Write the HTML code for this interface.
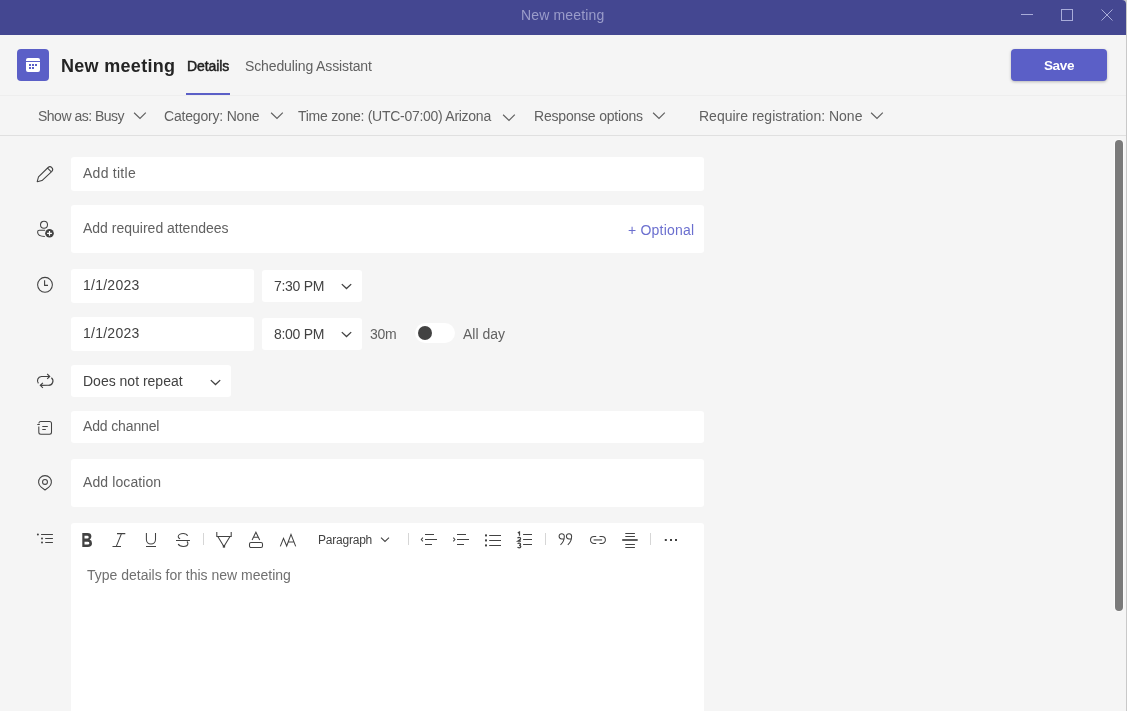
<!DOCTYPE html>
<html><head><meta charset="utf-8">
<style>
html,body{margin:0;padding:0;}
body{width:1127px;height:711px;overflow:hidden;position:relative;background:#c9c9c9;font-family:"Liberation Sans",sans-serif;}
.win{position:absolute;left:0;top:0;width:1126px;height:711px;background:#f5f5f5;border-top-right-radius:4px;overflow:hidden;}
.tb{position:absolute;left:0;top:0;width:1126px;height:35px;background:#444791;}
.a{position:absolute;white-space:pre;line-height:16px;font-size:14px;will-change:transform;}
.box{position:absolute;background:#fff;border-radius:3px;}
svg{position:absolute;overflow:visible;}
.hr{position:absolute;left:0;width:1126px;height:1px;background:#e6e6e6;}
</style></head><body>
<div class="win">
  <div class="tb"></div>
  <div class="a" style="left:521px;top:7px;color:#9a9cca;letter-spacing:0.16px;">New meeting</div>
  <!-- window controls -->
  <div style="position:absolute;left:1021px;top:14px;width:12px;height:1px;background:#a9acd9;"></div>
  <div style="position:absolute;left:1061px;top:9px;width:10px;height:10px;border:1px solid #a9acd9;"></div>
  <svg style="left:1101px;top:9px" width="12" height="12" viewBox="0 0 12 12"><path d="M0.5 0.5L11.5 11.5M11.5 0.5L0.5 11.5" stroke="#a9acd9" stroke-width="1"/></svg>

  <!-- header -->
  <div style="position:absolute;left:17px;top:49px;width:32px;height:32px;background:#5b5fc7;border-radius:4px;"></div>
  <svg style="left:26px;top:58px" width="14" height="14" viewBox="0 0 14 14"><path d="M0 3V2Q0 0 2 0H12Q14 0 14 2V3Z M0 4H14V12Q14 14 12 14H2Q0 14 0 12Z" fill="#fff"/><g fill="#5b5fc7" shape-rendering="crispEdges"><rect x="3" y="6" width="2" height="2"/><rect x="6" y="6" width="2" height="2"/><rect x="9" y="6" width="2" height="2"/><rect x="3" y="9" width="2" height="2"/><rect x="6" y="9" width="2" height="2"/></g></svg>
  <div class="a" style="left:61px;top:56px;font-size:18px;line-height:20px;font-weight:700;color:#242424;letter-spacing:0.3px;">New meeting</div>
  <div class="a" style="left:187px;top:58px;font-weight:400;color:#1f1f1f;-webkit-text-stroke:0.5px #1f1f1f;letter-spacing:-0.1px;">Details</div>
  <div style="position:absolute;left:186px;top:93px;width:44px;height:2px;background:#5b5fc7;"></div>
  <div class="a" style="left:245px;top:58px;color:#616161;letter-spacing:-0.12px;">Scheduling Assistant</div>
  <div style="position:absolute;left:1011px;top:49px;width:96px;height:32px;background:#5b5fc7;border-radius:4px;box-shadow:0 1px 3px rgba(0,0,0,0.25);"></div>
  <div class="a" style="left:1011px;width:96px;text-align:center;top:57.5px;font-size:13.5px;font-weight:700;color:#fff;letter-spacing:-0.35px;">Save</div>
  <div class="hr" style="top:95px;background:#eeeeee;"></div>

  <!-- options toolbar -->
  <div class="a" style="left:38px;top:108px;color:#616161;letter-spacing:-0.5px;">Show as: Busy</div>
  <div class="a" style="left:164px;top:108px;color:#616161;letter-spacing:-0.19px;">Category: None</div>
  <div class="a" style="left:298px;top:108px;color:#616161;letter-spacing:-0.27px;">Time zone: (UTC-07:00) Arizona</div>
  <div class="a" style="left:534px;top:108px;color:#616161;letter-spacing:-0.2px;">Response options</div>
  <div class="a" style="left:699px;top:108px;color:#616161;">Require registration: None</div>
  <div class="hr" style="top:135px;background:#e0e0e0;"></div>

  <!-- fields -->
  <div class="box" style="left:71px;top:157px;width:633px;height:34px;"></div>
  <div class="a" style="left:83px;top:165px;color:#616161;letter-spacing:0.26px;">Add title</div>
  <div class="box" style="left:71px;top:205px;width:633px;height:48px;"></div>
  <div class="a" style="left:83px;top:220px;color:#616161;">Add required attendees</div>
  <div class="a" style="left:628px;top:222px;color:#6b6fcf;letter-spacing:0.2px;">+ Optional</div>

  <div class="box" style="left:71px;top:269px;width:183px;height:34px;"></div>
  <div class="a" style="left:83px;top:277px;color:#424242;letter-spacing:0.25px;">1/1/2023</div>
  <div class="box" style="left:262px;top:270px;width:100px;height:32px;"></div>
  <div class="a" style="left:274px;top:278px;color:#424242;letter-spacing:-0.3px;">7:30 PM</div>

  <div class="box" style="left:71px;top:317px;width:183px;height:34px;"></div>
  <div class="a" style="left:83px;top:325px;color:#424242;letter-spacing:0.25px;">1/1/2023</div>
  <div class="box" style="left:262px;top:318px;width:100px;height:32px;"></div>
  <div class="a" style="left:274px;top:326px;color:#424242;letter-spacing:-0.3px;">8:00 PM</div>
  <div class="a" style="left:370px;top:326px;color:#616161;letter-spacing:-0.3px;">30m</div>
  <div class="box" style="left:415px;top:323px;width:40px;height:20px;border-radius:10px;"></div>
  <div style="position:absolute;left:418px;top:326px;width:14px;height:14px;border-radius:7px;background:#424242;"></div>
  <div class="a" style="left:463px;top:326px;color:#616161;">All day</div>

  <div class="box" style="left:71px;top:365px;width:160px;height:32px;"></div>
  <div class="a" style="left:83px;top:373px;color:#424242;">Does not repeat</div>

  <div class="box" style="left:71px;top:411px;width:633px;height:32px;"></div>
  <div class="a" style="left:83px;top:418px;color:#616161;letter-spacing:-0.14px;">Add channel</div>

  <div class="box" style="left:71px;top:459px;width:633px;height:48px;"></div>
  <div class="a" style="left:83px;top:474px;color:#616161;letter-spacing:0.1px;">Add location</div>

  <div class="box" style="left:71px;top:523px;width:633px;height:200px;"></div>
  <div class="a" style="left:318px;top:533px;font-size:12px;line-height:14px;color:#424242;letter-spacing:-0.22px;">Paragraph</div>
  <div class="a" style="left:87px;top:567px;color:#707070;">Type details for this new meeting</div>


  <!-- toolbar chevrons -->
  <svg style="left:128px;top:104px" width="24" height="24" viewBox="0 0 24 24"><path d="M6.1 8.8L12 14.4L17.8 8.6" fill="none" stroke="#616161" stroke-width="1.2"/></svg>
  <svg style="left:265px;top:104px" width="24" height="24" viewBox="0 0 24 24"><path d="M6.1 8.8L12 14.4L17.8 8.6" fill="none" stroke="#616161" stroke-width="1.2"/></svg>
  <svg style="left:497px;top:106px" width="24" height="24" viewBox="0 0 24 24"><path d="M6.1 8.8L12 14.4L17.8 8.6" fill="none" stroke="#616161" stroke-width="1.2"/></svg>
  <svg style="left:647px;top:104px" width="24" height="24" viewBox="0 0 24 24"><path d="M6.1 8.8L12 14.4L17.8 8.6" fill="none" stroke="#616161" stroke-width="1.2"/></svg>
  <svg style="left:865px;top:104px" width="24" height="24" viewBox="0 0 24 24"><path d="M6.1 8.8L12 14.4L17.8 8.6" fill="none" stroke="#616161" stroke-width="1.2"/></svg>
  <!-- input chevrons -->
  <svg style="left:334px;top:274px" width="24" height="24" viewBox="0 0 24 24"><path d="M7.8 10.1L12.5 14.5L17.2 10.1" fill="none" stroke="#424242" stroke-width="1.3"/></svg>
  <svg style="left:334px;top:322px" width="24" height="24" viewBox="0 0 24 24"><path d="M7.8 10.1L12.5 14.5L17.2 10.1" fill="none" stroke="#424242" stroke-width="1.3"/></svg>
  <svg style="left:203px;top:370px" width="24" height="24" viewBox="0 0 24 24"><path d="M7.8 10.1L12.5 14.5L17.2 10.1" fill="none" stroke="#424242" stroke-width="1.3"/></svg>

  <!-- left icons -->
  <svg style="left:32px;top:160px" width="28" height="28" viewBox="0 0 28 28"><path d="M6.5 16.9L16.1 7.5A2.69 2.69 0 0 1 19.9 11.3L10 20.6L5.2 21.7Z M15.6 8.1L19.3 11.8" fill="none" stroke="#424242" stroke-width="1.05" stroke-linejoin="round"/></svg>
  <svg style="left:32px;top:215px" width="28" height="28" viewBox="0 0 28 28"><circle cx="12" cy="9.8" r="3.5" fill="none" stroke="#424242" stroke-width="1.05"/><path d="M13 15.2H7.4Q5.6 15.2 5.6 17Q5.6 21.4 12.8 21.4" fill="none" stroke="#424242" stroke-width="1.05"/><circle cx="17.5" cy="18.3" r="4.3" fill="#424242"/><path d="M17.5 15.9V20.7M15.1 18.3H19.9" stroke="#fff" stroke-width="1.2"/></svg>
  <svg style="left:32px;top:271px" width="28" height="28" viewBox="0 0 28 28"><circle cx="13" cy="13.8" r="7.4" fill="none" stroke="#424242" stroke-width="1.05"/><path d="M12.6 9.2V14.4H16" fill="none" stroke="#424242" stroke-width="1.1"/></svg>
  <svg style="left:32px;top:367px" width="28" height="28" viewBox="0 0 28 28"><path d="M6.4 16.4A4.3 4.3 0 0 1 9.4 9.45H17.6M15.2 7L17.7 9.45L15.2 11.9M19.4 10.7A4.3 4.3 0 0 1 16.6 18.3H8.4M10.9 15.8L8.3 18.3L10.9 20.8" fill="none" stroke="#424242" stroke-width="1.15"/></svg>
  <svg style="left:32px;top:413px" width="28" height="28" viewBox="0 0 28 28"><path d="M6.8 13.4V19.2Q6.8 21.2 8.8 21.2H17.5Q19.5 21.2 19.5 19.2V10.5Q19.5 8.5 17.5 8.5H8.7Q7.3 8.5 6.7 10.3M5.3 11.5H7.8M10.3 13.5H15.8M10.3 16.5H13.8" fill="none" stroke="#424242" stroke-width="1.05"/></svg>
  <svg style="left:32px;top:469px" width="28" height="28" viewBox="0 0 28 28"><path d="M13 21L9.16 18.12A6.4 6.4 0 1 1 16.84 18.12Z" fill="none" stroke="#424242" stroke-width="1.05" stroke-linejoin="round"/><circle cx="13" cy="12.9" r="2.45" fill="none" stroke="#424242" stroke-width="1.05"/></svg>
  <svg style="left:32px;top:525px" width="28" height="28" viewBox="0 0 28 28"><path d="M9.1 9.45H20.9M13.2 13.5H20.9M13.2 17.45H20.9" stroke="#424242" stroke-width="1.15"/><circle cx="5.9" cy="9.45" r="1" fill="#424242"/><circle cx="10" cy="13.5" r="1" fill="#424242"/><circle cx="10" cy="17.45" r="1" fill="#424242"/></svg>

  <!-- editor toolbar -->
  <svg style="left:82px;top:533px" width="11" height="14" viewBox="0 0 11 14"><path fill-rule="evenodd" d="M0.3 0H5.4Q9.4 0 9.4 3.4Q9.4 5.4 7.6 6.5Q10 7.3 10 10.2Q10 14 5.8 14H0.3Z M2.5 2.85V5.5H5.3Q6.7 5.5 6.7 4.2Q6.7 2.85 5.3 2.85Z M2.5 8.7V11.6H5.7Q7.4 11.6 7.4 10.15Q7.4 8.7 5.7 8.7Z" fill="#424242"/></svg>
  <svg style="left:112px;top:533px" width="14" height="14" viewBox="0 0 14 14"><path d="M5 0.6H13.3M0.5 13.4H9M9.5 0.6L4.3 13.4" fill="none" stroke="#424242" stroke-width="1.05"/></svg>
  <svg style="left:145px;top:533px" width="12" height="14" viewBox="0 0 12 14"><path d="M1.4 0V6.55A4.55 4.55 0 0 0 10.5 6.55V0M1 13.4H11" fill="none" stroke="#424242" stroke-width="1.05"/></svg>
  <svg style="left:176px;top:533px" width="14" height="14" viewBox="0 0 14 14"><path d="M11.6 2.9C10.8 1 9 0.4 7.2 0.4C4.5 0.4 2.2 1.8 2.2 3.7C2.2 4.6 3 5.3 4.1 5.7M0 7.5H13.9M10.9 8.5C11.6 9.1 11.9 9.7 11.9 10.4C11.9 12.2 9.8 13.4 7.2 13.4C4.8 13.4 2.9 12.5 2.2 11" fill="none" stroke="#424242" stroke-width="1.05"/></svg>
  <div style="position:absolute;left:203px;top:533px;width:1px;height:12px;background:#d6d6d6;"></div>
  <svg style="left:216px;top:532px" width="16" height="16" viewBox="0 0 16 16"><path d="M0.8 0V4.4H15.2V0M1.8 4.4L7.9 14.6L14 4.4" fill="none" stroke="#424242" stroke-width="1.05"/><rect x="6.8" y="13" width="2.3" height="2.6" fill="#424242"/></svg>
  <svg style="left:249px;top:532px" width="14" height="16" viewBox="0 0 14 16"><path d="M3.1 8L6.9 0.3L10.7 8M4.6 5.3H9.2" fill="none" stroke="#424242" stroke-width="1.05"/><rect x="0.5" y="10.5" width="13" height="5" rx="1.5" fill="none" stroke="#424242" stroke-width="1.05"/></svg>
  <svg style="left:280px;top:533px" width="16" height="14" viewBox="0 0 16 14"><path d="M0.3 13.4L3.5 5.4L6.7 13L11 1.4L15.7 13.4M8.5 9H13.5" fill="none" stroke="#424242" stroke-width="1.05"/></svg>
  <svg style="left:376px;top:533px" width="14" height="14" viewBox="0 0 14 14"><path d="M5 4.6L9 8.5L13 4.6" fill="none" stroke="#424242" stroke-width="1.05"/></svg>
  <div style="position:absolute;left:408px;top:533px;width:1px;height:12px;background:#d6d6d6;"></div>
  <svg style="left:420px;top:532px" width="18" height="16" viewBox="0 0 18 16"><path d="M5 2.4H14M5 7.5H17M5 12.5H12M2.9 5.6L1.3 7.5L2.9 9.4" fill="none" stroke="#424242" stroke-width="1.05"/></svg>
  <svg style="left:452px;top:532px" width="18" height="16" viewBox="0 0 18 16"><path d="M5 2.4H14M5 7.5H17M5 12.5H12M1.3 5.6L2.9 7.5L1.3 9.4" fill="none" stroke="#424242" stroke-width="1.05"/></svg>
  <svg style="left:484px;top:532px" width="18" height="16" viewBox="0 0 18 16"><path d="M5.2 3.5H17M5.2 8.5H17M5.2 13.5H17" fill="none" stroke="#424242" stroke-width="1.1"/><rect x="1" y="2.4" width="2" height="2" fill="#424242"/><rect x="1" y="7.4" width="2" height="2" fill="#424242"/><rect x="1" y="12.4" width="2" height="2" fill="#424242"/></svg>
  <svg style="left:514px;top:529px" width="22" height="22" viewBox="0 0 22 22"><path d="M9.1 5.5H18M9.1 10.5H18M9.1 15.5H18" fill="none" stroke="#424242" stroke-width="1.1"/><path d="M3.8 3.9L5.5 3V6.8M3.6 9.3Q4 8.3 5.2 8.3Q6.6 8.3 6.6 9.4Q6.6 10.3 5.5 11L3.8 12.2H7M3.6 14.7Q4.2 14.1 5.2 14.1Q6.6 14.1 6.6 15.3Q6.6 16.3 5.1 16.3Q6.8 16.3 6.8 17.5Q6.8 18.8 5.1 18.8Q4 18.8 3.5 18.2" fill="none" stroke="#424242" stroke-width="1.2"/></svg>
  <div style="position:absolute;left:545px;top:533px;width:1px;height:12px;background:#d6d6d6;"></div>
  <svg style="left:558px;top:533px" width="16" height="13" viewBox="0 0 16 13"><path d="M6.3 4V3.3A2.6 2.6 0 1 0 3.7 5.9H6.2M6.3 3.5Q6.3 8.5 2.5 11.8M13.6 4V3.3A2.6 2.6 0 1 0 11 5.9H13.5M13.6 3.5Q13.6 8.5 9.8 11.8" fill="none" stroke="#424242" stroke-width="1.05"/></svg>
  <svg style="left:589px;top:535px" width="18" height="10" viewBox="0 0 18 10"><path d="M7.2 1.4H5A3.5 3.5 0 0 0 5 8.4H7.2M10.5 1.4H12.9A3.5 3.5 0 0 1 12.9 8.4H10.5" fill="none" stroke="#424242" stroke-width="1.05"/><path d="M4.6 4.9H13.1" stroke="#8a8a8a" stroke-width="1.8"/></svg>
  <svg style="left:621px;top:532px" width="18" height="17" viewBox="0 0 18 17"><path d="M4.3 1.5H13.9M4.3 4.5H13.9M4.3 12.5H13.9M4.3 15.5H13.9" fill="none" stroke="#424242" stroke-width="1.05"/><path d="M1.2 8H16.7" stroke="#424242" stroke-width="1.7"/></svg>
  <div style="position:absolute;left:650px;top:533px;width:1px;height:12px;background:#d6d6d6;"></div>
  <svg style="left:664px;top:538px" width="14" height="4" viewBox="0 0 14 4"><rect x="0.8" y="1" width="2" height="2" fill="#424242"/><rect x="6" y="1" width="2" height="2" fill="#424242"/><rect x="11" y="1" width="2" height="2" fill="#424242"/></svg>

  <!-- scrollbar -->
  <div style="position:absolute;left:1115px;top:140px;width:8px;height:471px;border-radius:4px;background:#7a7a7a;box-shadow:0 0 0 1px #fbfbfb;"></div>
</div>
</body></html>
